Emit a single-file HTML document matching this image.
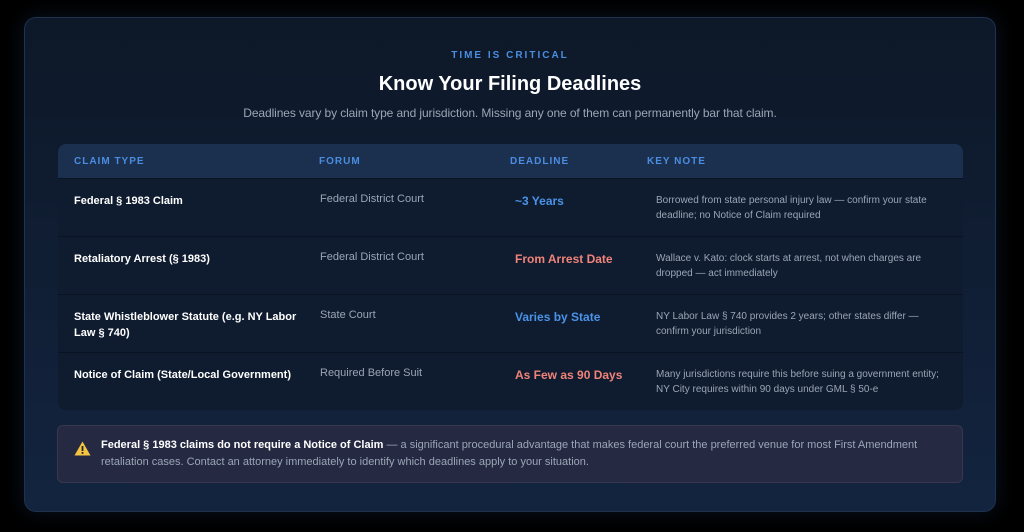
<!DOCTYPE html><html><head><style>
body{margin:0;width:1024px;height:532px;background:#000;font-family:"Liberation Sans",sans-serif;overflow:hidden;position:relative}
.card{position:absolute;left:24px;top:17px;width:970px;height:493px;border-radius:12px;border:1px solid #1e3350;background:linear-gradient(#0d1828,#13243f);box-shadow:0 0 20px rgba(40,80,140,.25)}
.eyebrow{position:absolute;top:32px;left:0;width:100%;text-align:center;color:#4a8de0;font-size:10px;font-weight:bold;letter-spacing:2px}
h1{position:absolute;top:55px;left:0;width:100%;margin:0;text-align:center;color:#fff;font-size:20px;font-weight:bold}
.sub{position:absolute;top:88px;left:0;width:100%;text-align:center;color:#9aa6b6;font-size:12px;letter-spacing:-0.1px}
.tbl{position:absolute;left:33px;top:126px;width:905px;border-radius:8px;overflow:hidden;background:#0f1b2e}
.hd{height:34px;background:#1b2f4f;position:relative;color:#4a8de0;font-size:10px;font-weight:bold;letter-spacing:1px}
.hd span,.row span{position:absolute}
.row{height:57px;border-top:1px solid #0a1322;position:relative;font-size:11px;background:#0f1c2f}
.c1{left:16px;color:#fff;font-weight:bold;width:230px;line-height:16px}
.c2{left:262px;color:#9aa6b6}
.c3{left:457px;font-weight:bold;font-size:12px}
.c4{left:598px;color:#9aa6b6;font-size:10px;width:290px;line-height:15px}
.hd span{top:12px}
.row .c1,.row .c2{top:14px}.row .c3{top:15px}.row .c4{top:14px}
.b{color:#4a93e8}.r{color:#f0837a}
.note{position:absolute;left:32px;top:407px;width:904px;height:56px;border-radius:6px;border:1px solid #3a3650;background:#252a42;font-size:11px;color:#9aa6b6;line-height:17px}
.note div{position:absolute;left:43px;top:11px;width:840px}
.note b{color:#fff}
</style></head><body><div class="card">
<div class="eyebrow">TIME IS CRITICAL</div>
<h1>Know Your Filing Deadlines</h1>
<div class="sub">Deadlines vary by claim type and jurisdiction. Missing any one of them can permanently bar that claim.</div>
<div class="tbl">
<div class="hd"><span style="left:16px">CLAIM TYPE</span><span style="left:261px">FORUM</span><span style="left:452px">DEADLINE</span><span style="left:589px">KEY NOTE</span></div>
<div class="row"><span class="c1">Federal § 1983 Claim</span><span class="c2">Federal District Court</span><span class="c3 b">~3 Years</span><span class="c4">Borrowed from state personal injury law — confirm your state deadline; no Notice of Claim required</span></div>
<div class="row"><span class="c1">Retaliatory Arrest (§ 1983)</span><span class="c2">Federal District Court</span><span class="c3 r">From Arrest Date</span><span class="c4">Wallace v. Kato: clock starts at arrest, not when charges are dropped — act immediately</span></div>
<div class="row"><span class="c1">State Whistleblower Statute (e.g. NY Labor Law § 740)</span><span class="c2">State Court</span><span class="c3 b">Varies by State</span><span class="c4">NY Labor Law § 740 provides 2 years; other states differ — confirm your jurisdiction</span></div>
<div class="row"><span class="c1">Notice of Claim (State/Local Government)</span><span class="c2">Required Before Suit</span><span class="c3 r">As Few as 90 Days</span><span class="c4">Many jurisdictions require this before suing a government entity; NY City requires within 90 days under GML § 50-e</span></div>
</div>
<div class="note"><svg style="position:absolute;left:16px;top:15px" width="17" height="15" viewBox="0 0 17 15"><path d="M8.5 0.5L16.5 14.5H0.5Z" fill="#f5c542"/><rect x="7.6" y="5" width="1.8" height="5" fill="#222"/><rect x="7.6" y="11" width="1.8" height="1.8" fill="#222"/></svg><div><b>Federal § 1983 claims do not require a Notice of Claim</b> — a significant procedural advantage that makes federal court the preferred venue for most First Amendment retaliation cases. Contact an attorney immediately to identify which deadlines apply to your situation.</div></div>
</div></body></html>
